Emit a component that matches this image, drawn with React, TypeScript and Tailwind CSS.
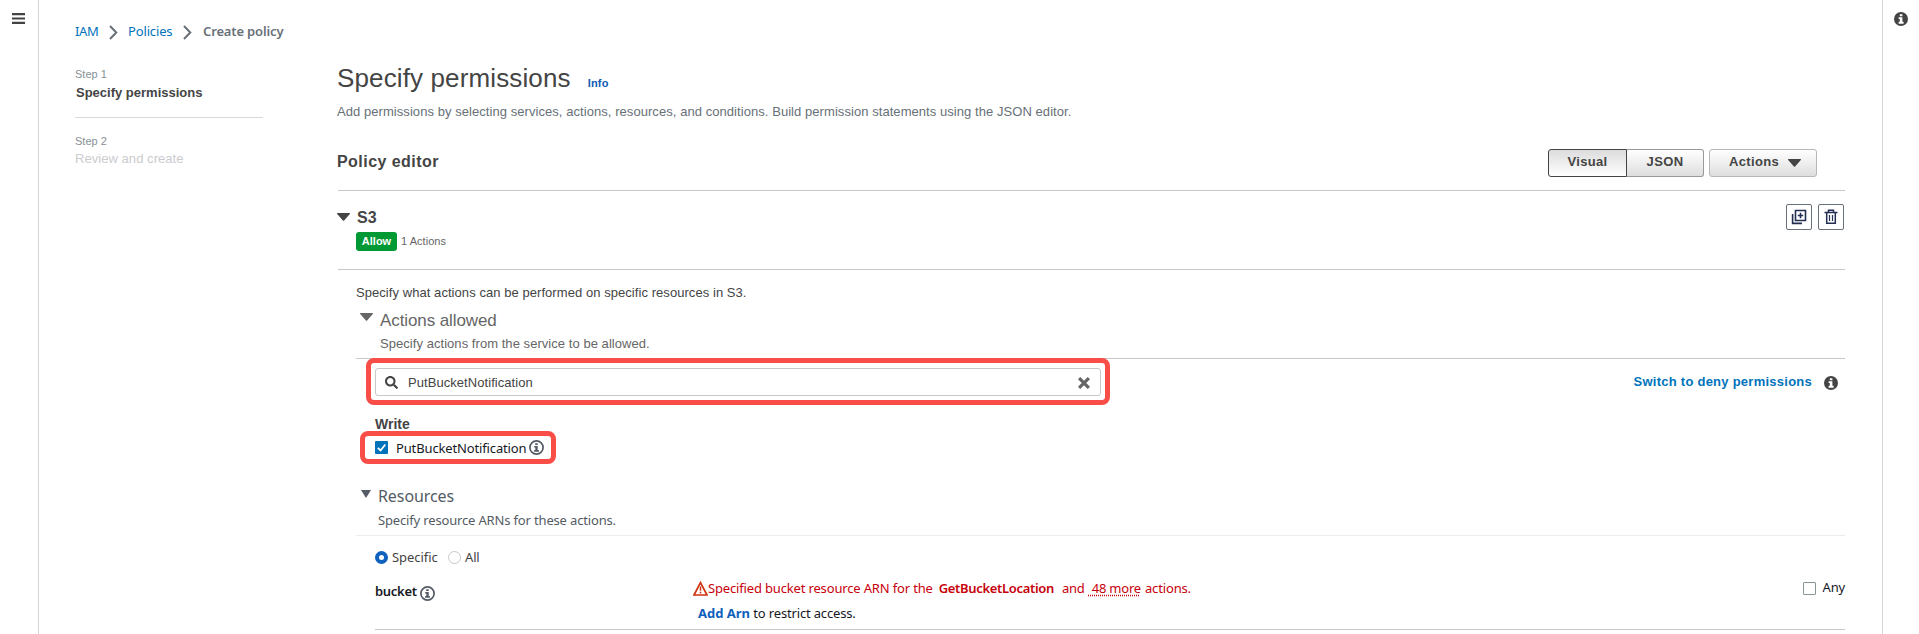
import type { ReactNode } from "react";
import { FaSearch } from "react-icons/fa";

const ember = "font-['Noto_Sans',sans-serif]";

function Caret({ className = "" }: { className?: string }) {
  return (
    <svg viewBox="0 0 13 8" className={`h-2 w-[13px] shrink-0 fill-current ${className}`}>
      <path d="M0.4 0H12.6Q13.2 0.3 12.8 0.9L7.1 7.5Q6.5 8 5.9 7.5L0.2 0.9Q-0.2 0.3 0.4 0Z" />
    </svg>
  );
}

function Chevron() {
  return (
    <svg viewBox="0 0 9 15" className="h-[15px] w-[9px] shrink-0 fill-none stroke-[#687078] stroke-2">
      <path d="M1 1l6.3 6.5L1 14" />
    </svg>
  );
}

function InfoSolid() {
  return (
    <svg viewBox="0 0 14 14" className="size-3.5 shrink-0">
      <circle cx="7" cy="7" r="7" fill="#444" />
      <path d="M5.8 2.2h2.6v2H5.8zM4.6 5.2h3.8v4.6h1.2v1.9H4.6V9.8h1.2V7.1H4.6z" fill="#fff" />
    </svg>
  );
}

function InfoOutline() {
  return (
    <svg viewBox="0 0 15 15" className="size-[15px] shrink-0">
      <circle cx="7.5" cy="7.5" r="6.6" fill="none" stroke="#545b64" strokeWidth="1.7" />
      <path d="M6.2 3.2h2.5v1.9H6.2zM5.2 6h3.5v4.1h1.2v1.7H5.1v-1.7h1.2V7.5H5.2z" fill="#545b64" />
    </svg>
  );
}

function IconButton({ children }: { children: ReactNode }) {
  return (
    <button className="flex size-[26px] items-center justify-center rounded-[2px] border border-[#687078] bg-white text-[#232f52]">
      {children}
    </button>
  );
}

function Sidebar() {
  return (
    <nav className="w-[188px] shrink-0 pt-[25px]">
      <div className="h-4 text-[11px] leading-4 text-[#879196]">Step 1</div>
      <div className="mt-0.5 h-[18px] pl-px text-[13px] leading-[18px] font-bold text-[#444]">Specify permissions</div>
      <div className="mt-[15px] border-t border-[#d5dbdb]" />
      <div className="mt-[15px] h-4 text-[11px] leading-4 text-[#879196]">Step 2</div>
      <div className="mt-px h-[18px] text-[13px] leading-[18px] tracking-[0.05px] text-[#cacccf]">Review and create</div>
    </nav>
  );
}

function EditorHeader() {
  return (
    <div className="ml-px flex h-[69px] justify-between border-b border-[#c8c8c8] pt-[27px] pr-7">
      <h2 className="-ml-px pt-px text-[16px] leading-6 font-bold tracking-[0.45px] text-[#444]">Policy editor</h2>
      <div className="flex h-7 text-[13px] leading-[23px] font-bold tracking-[0.35px] text-[#444]">
        <button className="flex w-[79px] items-start justify-center rounded-l-[3px] border border-[#444] bg-linear-to-b from-[#dcdcdc] to-white">
          Visual
        </button>
        <button className="flex w-[77px] items-start justify-center rounded-r-[3px] border border-l-0 border-[#999] bg-linear-to-b from-white to-[#dedede]">
          JSON
        </button>
        <button className="ml-[5px] flex w-[108px] items-start justify-between rounded-[3px] border border-[#b7b7b7] bg-linear-to-b from-white to-[#dedede] pr-[15px] pl-[19px]">
          Actions
          <Caret className="mt-[9px]" />
        </button>
      </div>
    </div>
  );
}

function ServiceHeader() {
  return (
    <div className="ml-px flex h-[79px] justify-between border-b border-[#c8c8c8] pt-[13px] pr-px">
      <div>
        <div className="-ml-px flex h-[26px] items-center gap-[7px] text-[#444]">
          <Caret />
          <span className="pt-0.5 text-[16px] font-bold">S3</span>
        </div>
        <div className="mt-0.5 ml-[18px] flex h-[19px] items-center gap-1 text-[11px]">
          <span className="h-[19px] w-[41px] rounded-[3px] bg-[#093] text-center leading-[19px] font-bold text-white">
            Allow
          </span>
          <span className="tracking-[0.05px] text-[#666]">1 Actions</span>
        </div>
      </div>
      <div className="flex gap-1.5">
        <IconButton>
          <svg viewBox="0 0 16 16" className="size-4 fill-none stroke-current">
            <path d="M4.5 1.5h10v10h-10zM9.5 3.8v5.4M6.8 6.5h5.4" strokeWidth="1.6" />
            <path d="M1.6 5v9.4H11" strokeWidth="1.6" />
          </svg>
        </IconButton>
        <IconButton>
          <svg viewBox="0 0 16 16" className="size-4 fill-none stroke-current">
            <path d="M1.5 3.5h13M5.5 3.3V1.2h5v2.1M3.7 3.5v10.8h8.6V3.5" strokeWidth="1.5" />
            <path d="M6.5 6v6M9.5 6v6" strokeWidth="1.2" />
          </svg>
        </IconButton>
      </div>
    </div>
  );
}

function ActionsSection() {
  return (
    <section className="text-[13px]">
      <p className="mt-[13px] ml-[19px] h-5 leading-5 tracking-[0.06px] text-[#444]">
        Specify what actions can be performed on specific resources in S3.
      </p>
      <div className="mt-[5px] ml-[23px] flex h-6 gap-[7px] text-[#666]">
        <Caret className="mt-[5px]" />
        <h3 className="mt-px text-[17px] leading-6 tracking-[-0.1px]">Actions allowed</h3>
      </div>
      <p className="mt-[2px] ml-[43px] h-5 leading-5 tracking-[0.05px] text-[#666]">
        Specify actions from the service to be allowed.
      </p>
      <div className="mt-1 ml-[19px] border-t border-[#c8c8c8]" />
      <div className="-mt-px ml-[29px] flex h-12 items-start justify-between pr-[7px]">
        <div className="h-[47px] w-[744px] rounded-lg border-5 border-[#f94d48] px-1 py-[5px]">
          <div className="flex h-7 items-center rounded-[3px] border border-[#c8c8c8] pt-px pr-[10px] pl-[9px]">
            <FaSearch className="size-[13px] text-[#444]" />
            <span className="ml-[9px] flex-1 pl-px tracking-[0.06px] text-[#444]">PutBucketNotification</span>
            <svg viewBox="0 0 12 12" className="size-3">
              <path d="M2.2 2.2l7.6 7.6M9.8 2.2L2.2 9.8" fill="none" stroke="#666" strokeWidth="3.2" strokeLinecap="square" />
            </svg>
          </div>
        </div>
        <div className="flex h-12 items-center gap-3 pt-px">
          <a className="-mt-px font-bold tracking-[0.25px] text-[#0073bb]">Switch to deny permissions</a>
          <InfoSolid />
        </div>
      </div>
      <h4 className="mt-3 ml-[38px] h-3 text-[14px] leading-3 font-bold text-[#444]">Write</h4>
      <label
        className={`mt-px ml-[23px] flex h-[33px] w-[196px] items-center rounded-lg border-5 border-[#f94d48] pl-[10px] ${ember}`}
      >
        <svg viewBox="0 0 13 13" className="size-[13px]">
          <rect width="13" height="13" rx="1" fill="#0073bb" />
          <path d="M2.8 6.8l2.8 2.7 4.7-6" fill="none" stroke="#fff" strokeWidth="1.8" />
        </svg>
        <span className="mr-[3px] ml-2 leading-5 tracking-[-0.14px] text-[#16191f]">PutBucketNotification</span>
        <InfoOutline />
      </label>
    </section>
  );
}

function ResourcesSection() {
  return (
    <section className={`text-[13px] tracking-[-0.16px] text-[#16191f] ${ember}`}>
      <div className="mt-5 ml-6 flex h-6 gap-[7px] text-[#545b64]">
        <svg viewBox="0 0 10 8" className="mt-1.5 h-2 w-2.5 fill-current">
          <path d="M0 0h10L5 8z" />
        </svg>
        <h3 className="text-[16px] leading-6 tracking-[-0.08px]">Resources</h3>
      </div>
      <p className="mt-0.5 ml-[41px] h-5 leading-5 text-[#545b64]">Specify resource ARNs for these actions.</p>
      <div className="mt-[5px] ml-[19px] border-t border-[#eaeded]" />
      <div className="mt-3 ml-[38px] flex h-[19px] items-center leading-[19px]">
        <span className="size-[13px] rounded-full border-4 border-[#0f62bd] bg-white" />
        <span className="ml-1 w-[56px] tracking-[-0.05px] text-[#444]">Specific</span>
        <span className="size-[13px] rounded-full border border-[#c8c8c8] bg-white" />
        <span className="ml-1 text-[#444]">All</span>
      </div>
      <div className="ml-[38px] flex h-[63px] border-b border-[#c8c8c8] pt-[11px]">
        <div className="flex h-7 w-[318px] items-center gap-[3px] font-semibold">
          <span className="-mt-px tracking-[-0.3px]">bucket</span>
          <span className="pt-0.5"><InfoOutline /></span>
        </div>
        <div className="flex-1">
          <div className="flex h-5 items-center leading-5 whitespace-pre text-[#c7000b]">
            <svg viewBox="0 0 15 15" className="size-[15px] shrink-0">
              <path d="M7.5 1.6L14 14H1z" fill="none" stroke="#d13212" strokeWidth="1.7" />
              <path d="M7.5 5.5v4.3M7.5 10.8v1.7" stroke="#d13212" strokeWidth="1.5" />
            </svg>
            <span>Specified bucket resource ARN for the</span>
            <b className="ml-1.5 font-semibold tracking-[-0.32px]">GetBucketLocation</b>
            <span className="ml-2 tracking-[-0.3px]">and</span>
            <span className="ml-1 tracking-[-0.2px] underline decoration-dotted underline-offset-2"> 48 more</span>
            <span className="ml-1">actions.</span>
          </div>
          <div className="mt-[5px] ml-[5px] h-5 leading-5">
            <b className="tracking-normal text-[#0f5fbd]">Add Arn</b> to restrict access.
          </div>
        </div>
        <label className="flex h-5 items-center gap-[7px]">
          <span className="size-[13px] rounded-[1px] border border-[#879596] bg-white" />
          Any
        </label>
      </div>
    </section>
  );
}

export default function App() {
  return (
    <div className="flex h-[634px] w-full overflow-hidden bg-white font-['Liberation_Sans',Arial,sans-serif]">
      <aside className="w-[39px] shrink-0 border-r border-[#d5d5d5] pt-[13px] pl-3">
        <svg viewBox="0 0 13 11" className="h-[11px] w-[13px] fill-[#444]">
          <path d="M0 0h13v2.3H0zM0 4.4h13v2.2H0zM0 8.7h13V11H0z" />
        </svg>
      </aside>
      <div className="min-w-0 flex-1 pt-[21px] pr-[37px] pl-9">
        <div className={`flex h-5 items-center text-[13px] leading-5 tracking-[-0.15px] text-[#0073bb] ${ember}`}>
          <a className="w-[23px] tracking-[-0.4px]">IAM</a>
          <span className="mr-2.5 ml-[11px] pt-0.5"><Chevron /></span>
          <a className="w-[45px]">Policies</a>
          <span className="mr-[11px] ml-2.5 pt-0.5"><Chevron /></span>
          <b className="font-semibold text-[#687078]">Create policy</b>
        </div>
        <div className="flex gap-[74px]">
          <Sidebar />
          <main className="min-w-0 flex-1 pt-[21px]">
            <div className="flex h-8 items-baseline gap-[17px]">
              <h1 className="text-[26px] leading-8 tracking-[0.13px] text-[#444]">Specify permissions</h1>
              <a className="text-[11px] font-bold tracking-[0.2px] text-[#0f5cb5]">Info</a>
            </div>
            <p className="mt-2 h-5 text-[13px] leading-[19px] tracking-[0.06px] text-[#687078]">
              Add permissions by selecting services, actions, resources, and conditions. Build permission statements using
              the JSON editor.
            </p>
            <EditorHeader />
            <ServiceHeader />
            <ActionsSection />
            <ResourcesSection />
          </main>
        </div>
      </div>
      <aside className="w-[37px] shrink-0 border-l border-[#d5d5d5] pt-3 pl-[11px]">
        <InfoSolid />
      </aside>
    </div>
  );
}
